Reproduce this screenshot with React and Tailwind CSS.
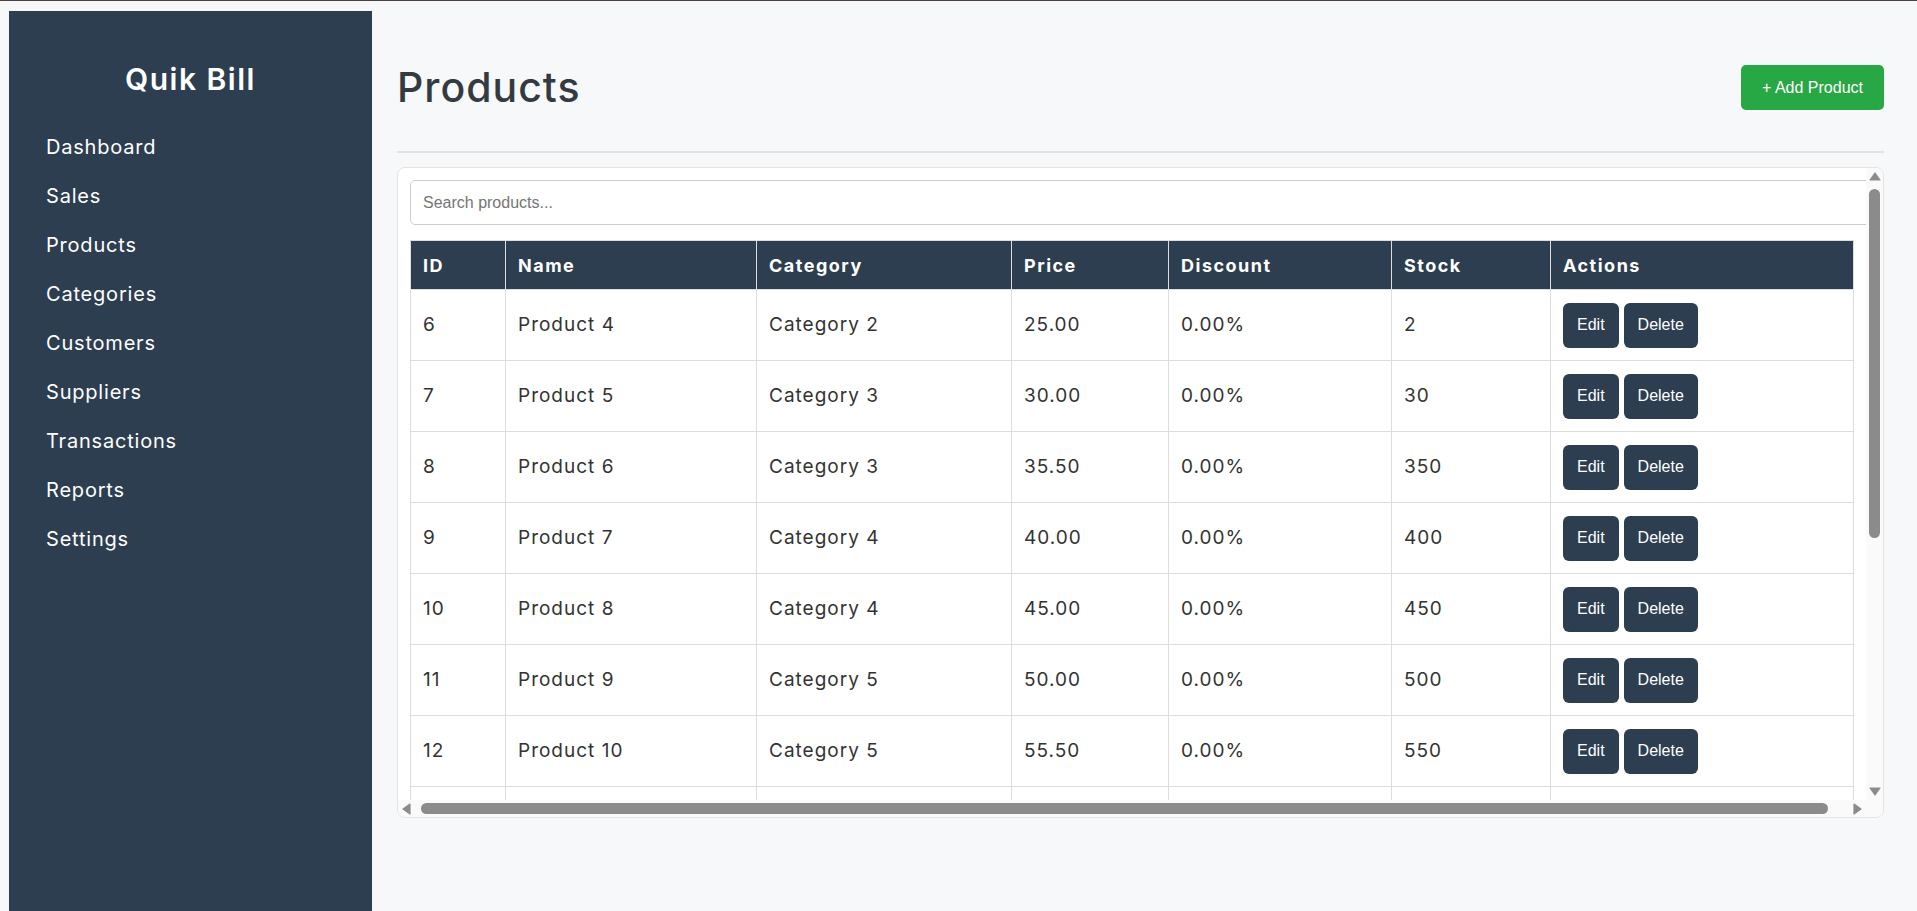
import React, { useState } from 'react';

// Menu lateral
const menuItems = [
  'Dashboard',
  'Sales',
  'Products',
  'Categories',
  'Customers',
  'Suppliers',
  'Transactions',
  'Reports',
  'Settings'
];

// Datos de productos
const products = [
  { id: 6, name: 'Product 4', category: 'Category 2', price: 25.0, discount: 0, stock: 2 },
  { id: 7, name: 'Product 5', category: 'Category 3', price: 30.0, discount: 0, stock: 30 },
  { id: 8, name: 'Product 6', category: 'Category 3', price: 35.5, discount: 0, stock: 350 },
  { id: 9, name: 'Product 7', category: 'Category 4', price: 40.0, discount: 0, stock: 400 },
  { id: 10, name: 'Product 8', category: 'Category 4', price: 45.0, discount: 0, stock: 450 },
  { id: 11, name: 'Product 9', category: 'Category 5', price: 50.0, discount: 0, stock: 500 },
  { id: 12, name: 'Product 10', category: 'Category 5', price: 55.5, discount: 0, stock: 550 },
  { id: 13, name: 'Product 11', category: 'Category 6', price: 60.0, discount: 0, stock: 600 }
];

const columns = [
  { label: 'ID', width: 'w-[95px]' },
  { label: 'Name', width: 'w-[251px]' },
  { label: 'Category', width: 'w-[255px]' },
  { label: 'Price', width: 'w-[157px]' },
  { label: 'Discount', width: 'w-[223px]' },
  { label: 'Stock', width: 'w-[159px]' },
  { label: 'Actions', width: '' }
];

// Flechas de las barras de desplazamiento
const Arrow = ({ dir }) => {
  const points = {
    up: '1,8 6,1 11,8',
    down: '1,1 6,8 11,1',
    left: '8,1 1,6 8,11',
    right: '1,1 8,6 1,11'
  }[dir];
  const vertical = dir === 'up' || dir === 'down';
  return (
    <svg width={vertical ? 12 : 9} height={vertical ? 9 : 12} viewBox={vertical ? '0 0 12 9' : '0 0 9 12'}>
      <polygon points={points} fill="#8b8b8b" stroke="#8b8b8b" strokeWidth="1.2" strokeLinejoin="round" />
    </svg>
  );
};

const Sidebar = () => (
  <aside className="w-[363px] h-[900px] shrink-0 bg-[#2c3e50] text-white pt-[50px]">
    <h2 className="text-center text-[30px] leading-[36px] font-semibold tracking-[1.5px]">Quik Bill</h2>
    <ul className="mt-[25px] pl-[37px]">
      {menuItems.map((item) => (
        <li key={item} className="h-[49px] flex items-center text-[20px] tracking-[0.8px] cursor-pointer">
          {item}
        </li>
      ))}
    </ul>
  </aside>
);

const ProductsTable = () => {
  const [search, setSearch] = useState('');

  const filtered = products.filter((p) =>
    p.name.toLowerCase().includes(search.toLowerCase())
  );

  return (
    <div className="mt-[14px] h-[651px] flex rounded-[8px] border border-[#e4e4e4] bg-white overflow-hidden">
      <div className="flex-1 min-w-0 flex flex-col">
        {/* Area visible */}
        <div className="flex-1 min-h-0 overflow-hidden p-[12px]">
          <input
            type="text"
            value={search}
            onChange={(e) => setSearch(e.target.value)}
            placeholder="Search products..."
            className="block box-content w-full h-[19px] py-[12px] px-[12px] border border-[#cccccc] rounded-[5px] text-[16px] text-[#333] placeholder:text-[#757575] outline-none font-['Liberation_Sans',Arial,sans-serif]"
          />

          <table className="mt-[15px] w-full table-fixed border-collapse text-[#333]">
            <thead>
              <tr className="bg-[#2c3e50] text-white">
                {columns.map((col) => (
                  <th
                    key={col.label}
                    className={`${col.width} h-[49px] px-[12px] text-left text-[18px] font-bold tracking-[1.5px] border border-[#dddddd]`}
                  >
                    {col.label}
                  </th>
                ))}
              </tr>
            </thead>
            <tbody>
              {filtered.map((p) => (
                <tr key={p.id}>
                  <td className="h-[71px] px-[12px] text-[19px] tracking-[1px] border border-[#dddddd]">{p.id}</td>
                  <td className="px-[12px] text-[19px] tracking-[1px] border border-[#dddddd]">{p.name}</td>
                  <td className="px-[12px] text-[19px] tracking-[1px] border border-[#dddddd]">{p.category}</td>
                  <td className="px-[12px] text-[19px] tracking-[1px] border border-[#dddddd]">{p.price.toFixed(2)}</td>
                  <td className="px-[12px] text-[19px] tracking-[1px] border border-[#dddddd]">{p.discount.toFixed(2)}%</td>
                  <td className="px-[12px] text-[19px] tracking-[1px] border border-[#dddddd]">{p.stock}</td>
                  <td className="px-[12px] border border-[#dddddd]">
                    <div className="flex gap-[5px] font-['Liberation_Sans',Arial,sans-serif] text-[16px] text-white">
                      <button className="h-[45px] px-[14px] rounded-[6px] bg-[#2c3e50]">Edit</button>
                      <button className="h-[45px] px-[14px] rounded-[6px] bg-[#2c3e50]">Delete</button>
                    </div>
                  </td>
                </tr>
              ))}
            </tbody>
          </table>
        </div>

        {/* Barra horizontal */}
        <div className="h-[17px] shrink-0 flex items-center bg-[#fafafa]">
          <div className="w-[17px] h-[17px] flex items-center justify-center"><Arrow dir="left" /></div>
          <div className="flex-1 min-w-0 h-full flex items-center pl-[6px]">
            <div className="w-[1407px] h-[11px] rounded-full bg-[#8b8b8b]"></div>
          </div>
          <div className="w-[17px] h-[17px] flex items-center justify-center"><Arrow dir="right" /></div>
        </div>
      </div>

      {/* Barra vertical */}
      <div className="w-[17px] shrink-0 flex flex-col bg-[#fafafa]">
        <div className="h-[17px] flex items-center justify-center"><Arrow dir="up" /></div>
        <div className="flex-1 min-h-0 flex flex-col items-center pt-[4px]">
          <div className="w-[11px] h-[349px] rounded-full bg-[#8b8b8b]"></div>
        </div>
        <div className="h-[17px] flex items-center justify-center"><Arrow dir="down" /></div>
        <div className="h-[17px]"></div>
      </div>
    </div>
  );
};

const App = () => {
  return (
    <div className="h-screen overflow-hidden bg-[#f7f8fa] font-['Inter','Noto_Sans',sans-serif]">
      <div className="h-px bg-[#4b4040]"></div>
      <div className="flex pl-[9px] pt-[10px]">
        <Sidebar />

        <main className="flex-1 min-w-0 pl-[25px] pr-[33px] pt-[54px]">
          <div className="h-[45px] flex items-center justify-between">
            <h1 className="text-[41px] leading-none font-medium tracking-[1px] text-[#343a40]">Products</h1>
            <button className="h-[45px] px-[21px] rounded-[5px] bg-[#28a745] text-white text-[16px] font-['Liberation_Sans',Arial,sans-serif]">
              + Add Product
            </button>
          </div>

          <div className="mt-[41px] h-[2px] bg-[#dfe2e6]"></div>

          <ProductsTable />
        </main>
      </div>
    </div>
  );
};

export default App;
